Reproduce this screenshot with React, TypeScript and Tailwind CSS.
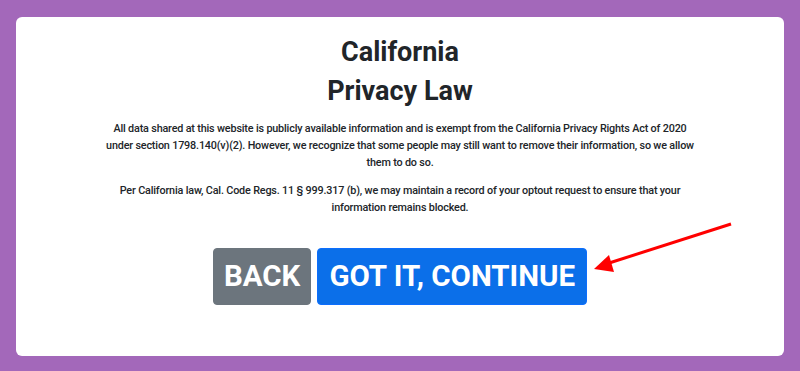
import React from "react";

// Red annotation arrow pointing at the continue button
function Arrow() {
  return (
    <svg
      className="pointer-events-none absolute left-0 top-0"
      width="800"
      height="371"
      viewBox="0 0 800 371"
    >
      <line x1="731" y1="224" x2="606" y2="264" stroke="#ff0000" strokeWidth="3" />
      <polygon points="594,269 609,255 614,272" fill="#ff0000" />
    </svg>
  );
}

export default function App() {
  return (
    <div
      className="relative h-[371px] w-[800px] bg-[#a368ba] px-4 pb-[15px] pt-[17px]"
      style={{ fontFamily: "Roboto, 'Liberation Sans', sans-serif" }}
    >
      <div className="flex h-full flex-col items-center rounded-md bg-white pt-[16px] text-[#212529]">
        <h1 className="text-center text-[27px] font-bold leading-[39px]">
          California
          <br />
          Privacy Law
        </h1>
        <div className="mt-[9px] w-[640px] text-center text-[10.8px] font-medium leading-[17px] tracking-[-0.17px]">
          <p>
            All data shared at this website is publicly available information and is exempt from the
            California Privacy Rights Act of 2020
            <br />
            under section 1798.140(v)(2). However, we recognize that some people may still want to
            remove their information, so we allow
            <br />
            them to do so.
          </p>
          <p className="mt-[11px]">
            Per California law, Cal. Code Regs. 11 § 999.317 (b), we may maintain a record of your
            optout request to ensure that your
            <br />
            information remains blocked.
          </p>
        </div>
        <div className="mt-[32px] flex gap-[6px]">
          <button className="h-[57px] rounded-[4px] border border-[#6c757d] bg-[#6c757d] px-[10px] text-[29.5px] font-bold leading-[45px] text-white">
            BACK
          </button>
          <button className="h-[57px] rounded-[4px] border border-[#0d6efd] bg-[#0b6fe9] px-[11px] text-[29.5px] font-bold leading-[45px] text-white">
            GOT IT, CONTINUE
          </button>
        </div>
      </div>
      <Arrow />
    </div>
  );
}
